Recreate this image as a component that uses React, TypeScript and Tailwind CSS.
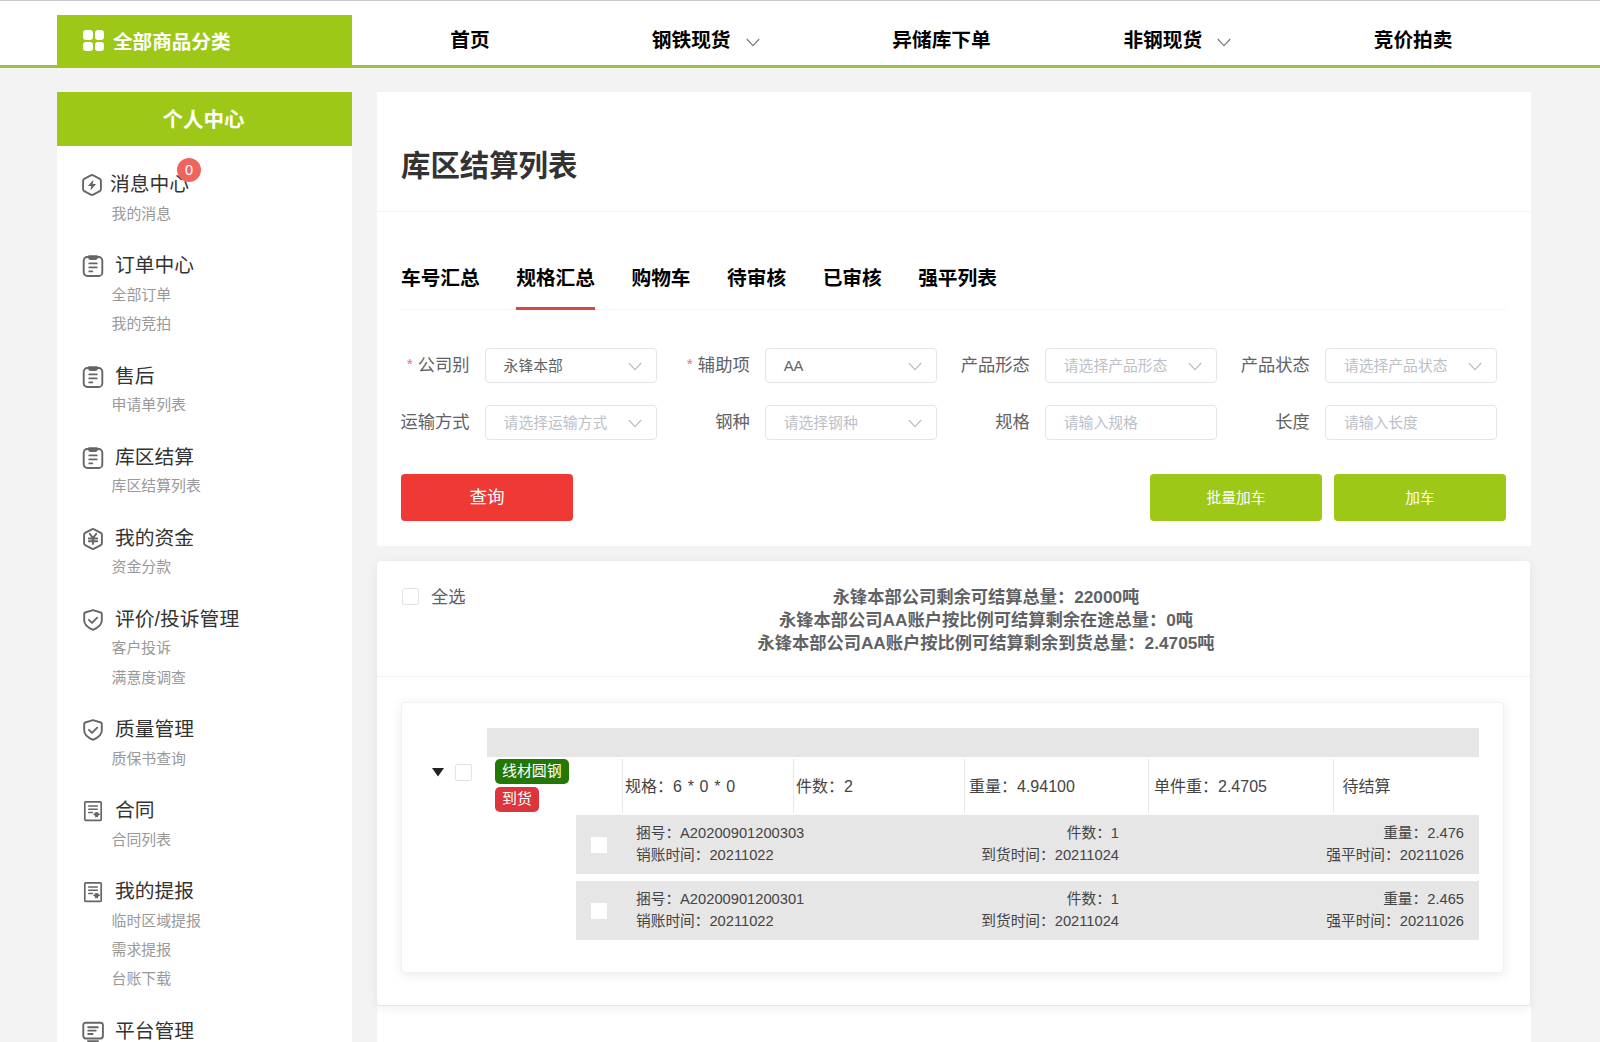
import { useState } from 'react'
import type { ReactNode } from 'react'
import clsx from 'clsx'

interface MenuGroup {
  icon: ReactNode
  title: string
  badge?: number
  children: string[]
}

interface Field {
  label: string
  required?: boolean
  value?: string
  placeholder?: string
  select?: boolean
}

function Svg({ children }: { children: ReactNode }) {
  return (
    <svg
      width="22"
      height="22"
      viewBox="0 0 22 22"
      fill="none"
      stroke="#666"
      strokeWidth="1.9"
      strokeLinecap="round"
      strokeLinejoin="round"
    >
      {children}
    </svg>
  )
}

const hexagon = (
  <path d="M9.8 1.4a2.4 2.4 0 0 1 2.4 0l6.600 3.500a2 2 0 0 1 1.100 1.800v8.600a2 2 0 0 1-1.100 1.800l-6.600 3.500a2.400 2.400 0 0 1-2.400 0l-6.600-3.500a2 2 0 0 1-1.100-1.800V6.700a2 2 0 0 1 1.100-1.800z" />
)

const messageIcon = (
  <Svg>
    {hexagon}
    <path
      d="M12.400 5.700 6.900 11.900h3.300l-.8 4.600 5.700-6.400h-3.400z"
      fill="#666"
      stroke="none"
    />
  </Svg>
)

const moneyIcon = (
  <Svg>
    {hexagon}
    <path d="m7.800 5.800 3.200 4.200 3.200-4.200M6.800 10.500h8.400M6.800 13.200h8.400M11 10.300v5.600" />
  </Svg>
)

const orderIcon = (
  <Svg>
    <rect x="1.700" y="2" width="18.600" height="19" rx="3.600" />
    <path d="M7 1.200h8v.8a2 2 0 0 1-2 2H9a2 2 0 0 1-2-2z" />
    <path d="M7.300 8.400h7.400M7.300 12.400h7.400M7.300 16.400h3" />
  </Svg>
)

const shieldIcon = (
  <Svg>
    <path d="m11 1.200 7.800 2.300q1 .3 1 1.300v6.700c0 4.200-3.800 7.200-8.800 9.300-5-2.100-8.800-5.100-8.800-9.300V4.800q0-1 1-1.300z" />
    <path d="m6.900 10.900 3.100 3 5.200-5.200" />
  </Svg>
)

const contractIcon = (
  <Svg>
    <rect x="2.800" y="1.900" width="16.400" height="18.400" rx=".8" strokeWidth="1.700" />
    <path d="M6.700 6h8.600M6.700 9.200h8.600M6.700 12.400h3.700" strokeWidth="1.500" />
    <circle cx="14.600" cy="14.300" r="2.400" fill="#666" stroke="none" />
    <path d="M13.200 15v2.600l1.400-.6 1.400.6V15z" fill="#666" stroke="none" />
    <path d="M11.800 14.300h5.600" strokeWidth="1.200" />
  </Svg>
)

const platformIcon = (
  <Svg>
    <rect x="1.300" y="1.700" width="19.600" height="15.800" rx="2.400" />
    <path d="M6.200 6.200h9.600M6.200 9.600h7.600M6.200 13h4.400M6 20.100h10" />
  </Svg>
)

const menus: MenuGroup[] = [
  { icon: messageIcon, title: '消息中心', badge: 0, children: ['我的消息'] },
  { icon: orderIcon, title: '订单中心', children: ['全部订单', '我的竞拍'] },
  { icon: orderIcon, title: '售后', children: ['申请单列表'] },
  { icon: orderIcon, title: '库区结算', children: ['库区结算列表'] },
  { icon: moneyIcon, title: '我的资金', children: ['资金分款'] },
  { icon: shieldIcon, title: '评价/投诉管理', children: ['客户投诉', '满意度调查'] },
  { icon: shieldIcon, title: '质量管理', children: ['质保书查询'] },
  { icon: contractIcon, title: '合同', children: ['合同列表'] },
  {
    icon: contractIcon,
    title: '我的提报',
    children: ['临时区域提报', '需求提报', '台账下载'],
  },
  { icon: platformIcon, title: '平台管理', children: [] },
]

const navs = [
  { title: '首页' },
  { title: '钢铁现货', arrow: true },
  { title: '异储库下单' },
  { title: '非钢现货', arrow: true },
  { title: '竞价拍卖' },
]

const tabs = ['车号汇总', '规格汇总', '购物车', '待审核', '已审核', '强平列表']

const fields: Field[] = [
  { label: '公司别', required: true, value: '永锋本部', select: true },
  { label: '辅助项', required: true, value: 'AA', select: true },
  { label: '产品形态', placeholder: '请选择产品形态', select: true },
  { label: '产品状态', placeholder: '请选择产品状态', select: true },
  { label: '运输方式', placeholder: '请选择运输方式', select: true },
  { label: '钢种', placeholder: '请选择钢种', select: true },
  { label: '规格', placeholder: '请输入规格' },
  { label: '长度', placeholder: '请输入长度' },
]

const bundles = [
  { no: 'A20200901200303', weight: '2.476' },
  { no: 'A20200901200301', weight: '2.465' },
]

function Chevron({ color }: { color: string }) {
  return (
    <svg width="14" height="9" viewBox="0 0 14 9" fill="none" stroke={color} strokeWidth="1.1">
      <path d="m.8 1 6.200 6.600L13.200 1" />
    </svg>
  )
}

function Checkbox({ plain }: { plain?: boolean }) {
  return (
    <span
      className={clsx(
        'block shrink-0 bg-white',
        plain ? 'size-4' : 'size-[17px] rounded-[2px] border border-[#e2e3e6]'
      )}
    />
  )
}

function Header() {
  return (
    <header className="flex h-[68px] border-t border-b-[3px] border-t-[#c6c6c6] border-b-[#a2bf45] bg-white pl-[57px]">
      <div className="mt-[14px] flex h-[53px] w-[295px] items-center bg-[#9dc817] pt-[2px] pl-[26px] text-[19.6px] font-bold text-white">
        <div className="mr-[9px] mb-[4px] grid grid-cols-2 gap-[2px]">
          {[0, 1, 2, 3].map((i) => (
            <span key={i} className="size-[9.500px] rounded-[3px] bg-white" />
          ))}
        </div>
        全部商品分类
      </div>
      <nav className="flex h-[80px] w-[1179px] text-[19.7px] font-bold text-black">
        {navs.map((nav) => (
          <div key={nav.title} className="flex flex-1 items-center justify-center gap-[15px]">
            {nav.title}
            {nav.arrow && (
              <span className="mt-[3px]">
                <Chevron color="#777" />
              </span>
            )}
          </div>
        ))}
      </nav>
    </header>
  )
}

function Sidebar() {
  return (
    <aside className="w-[295px] shrink-0 bg-white">
      <div className="flex h-[54px] items-center justify-center bg-[#9dc817] pt-[2px] pr-[2px] text-[20.500px] font-bold text-white">
        个人中心
      </div>
      <div className="pt-[24.6px] pl-[25px]">
        {menus.map((menu) => (
          <div key={menu.title} className="mb-[22.2px]">
            <div className="flex h-[29.4px] items-center text-[19.8px] text-[#333]">
              <span className={clsx(menu.badge !== undefined && 'mb-px -ml-px')}>{menu.icon}</span>
              <span className={clsx('relative', menu.badge === undefined ? 'ml-[11px]' : 'ml-[7px]')}>
                {menu.title}
                {menu.badge !== undefined && (
                  <span className="absolute -top-[12px] right-[-12px] flex size-6 items-center justify-center rounded-full bg-[#f06460] text-[14.500px] text-white">
                    {menu.badge}
                  </span>
                )}
              </span>
            </div>
            {menu.children.map((child) => (
              <div key={child} className="h-[29.4px] pl-[29.500px] text-[14.9px] leading-[29.4px] text-[#999]">
                {child}
              </div>
            ))}
          </div>
        ))}
      </div>
    </aside>
  )
}

function FormItem({ field }: { field: Field }) {
  return (
    <div className="flex items-center">
      <div className="flex w-[69px] shrink-0 justify-end text-[17.3px] whitespace-nowrap text-[#606266]">
        {field.required && <span className="-mt-px mr-[5px] text-[15.500px] text-[#f56c6c]">*</span>}
        {field.label}
      </div>
      <div className="ml-[15px] flex h-[35px] w-[172px] items-center justify-between rounded-[4px] border border-[#e2e4e8] pt-px pr-[14px] pl-[18px] text-[14.8px]">
        <span className={field.value ? 'text-[#606266]' : 'text-[#bcc0c7]'}>
          {field.value ?? field.placeholder}
        </span>
        {field.select && <Chevron color="#b9bdc4" />}
      </div>
    </div>
  )
}

function SearchPanel() {
  const [active, setActive] = useState(1)

  return (
    <section className="h-[454px] bg-white">
      <h1 className="flex h-[120px] items-center border-b border-[#f4f4f4] pt-[29px] pl-6 text-[29.4px] font-bold text-[#333]">
        库区结算列表
      </h1>
      <div className="pr-[25px] pl-6">
        <div className="mt-[34px] flex h-[64px] gap-[36.500px] border-b border-[#f4f4f4] text-[19.7px] font-bold text-black">
          {tabs.map((tab, i) => (
            <div
              key={tab}
              className={clsx(
                'h-[64px] border-b-[3px] leading-[65px]',
                i === active ? 'border-[#d9473f]' : 'border-transparent'
              )}
              onClick={() => setActive(i)}
            >
              {tab}
            </div>
          ))}
        </div>
        <div className="-ml-[0.4px] mt-[38px] grid grid-cols-[repeat(4,280.1px)] gap-y-[22px]">
          {fields.map((field) => (
            <FormItem key={field.label} field={field} />
          ))}
        </div>
        <div className="mt-[34px] flex gap-3 text-[14.7px] text-white">
          <button className="mr-auto h-[47px] w-[172px] rounded-[4px] bg-[#ee3935] text-[17.6px]">
            查询
          </button>
          <button className="h-[47px] w-[172px] rounded-[4px] bg-[#9dc817] pt-px">批量加车</button>
          <button className="h-[47px] w-[172px] rounded-[4px] bg-[#9dc817] pt-px">加车</button>
        </div>
      </div>
    </section>
  )
}

function BundleRow({ no, weight }: { no: string; weight: string }) {
  return (
    <div className="mb-[7px] ml-[88.500px] flex h-[59px] items-center bg-[#e6e6e6] pr-[15px] pl-[15px] text-[14.7px] leading-[22px] text-[#444]">
      <Checkbox plain />
      <div className="-mt-[2px] ml-[29.500px] w-[200px]">
        <div>捆号：{no}</div>
        <div>销账时间：20211022</div>
      </div>
      <div className="-mt-[2px] w-[283px] text-right">
        <div>件数：1</div>
        <div>到货时间：20211024</div>
      </div>
      <div className="-mt-[2px] ml-auto text-right">
        <div>重量：{weight}</div>
        <div>强平时间：20211026</div>
      </div>
    </div>
  )
}

function ResultList() {
  return (
    <section className="relative mr-px h-[445px] rounded-[4px] border-b border-[#e6e6e6] bg-white shadow-[0_2px_12px_0_rgba(0,0,0,0.07)]">
      <div className="flex h-[116px] border-b border-[#f0f1f3] px-6 text-[17.3px] text-[#606266]">
        <div className="mt-[25px] flex h-6 w-[100px] items-center gap-[12px]">
          <span className="mb-[3px] ml-px">
            <Checkbox />
          </span>
          全选
        </div>
        <div className="mt-[25px] w-[970px] text-center text-[17.25px] leading-[23px] font-bold">
          <div>永锋本部公司剩余可结算总量：22000吨</div>
          <div>永锋本部公司AA账户按比例可结算剩余在途总量：0吨</div>
          <div>永锋本部公司AA账户按比例可结算剩余到货总量：2.4705吨</div>
        </div>
      </div>
      <div className="mr-[26px] ml-[24px] mt-[25px] flex h-[271px] rounded-[4px] border border-[#f0f1f3] bg-white pt-[25px] pr-[24px] pl-[29.500px] shadow-[0_2px_12px_0_rgba(0,0,0,0.08)]">
        <div className="mt-[36px] flex h-[17px] w-[55.500px] shrink-0 items-center gap-[11.500px]">
          <svg width="12" height="9" viewBox="0 0 12 9">
            <path d="M0 0h12L6 8.500z" fill="#222" />
          </svg>
          <Checkbox />
        </div>
        <div className="flex-1">
          <div className="h-[29px] bg-[#e6e6e6]" />
          <div className="flex h-[58px] pt-[2px] pb-[2px] text-[16px] text-[#444]">
            <div className="flex w-[135px] shrink-0 flex-col items-start gap-[3px] pl-2 text-[14.9px] leading-[25px] text-white">
              <span className="rounded-[5px] bg-[#237804] px-[7px]">线材圆钢</span>
              <span className="rounded-[5px] bg-[#dc353c] px-[7px]">到货</span>
            </div>
            <div className="flex w-[171px] items-center border-l border-[#e9e9e9] pt-px pl-[2px] [word-spacing:1.3px]">
              规格：6 * 0 * 0
            </div>
            <div className="flex w-[171px] items-center border-l border-[#e9e9e9] pt-px pl-[2px]">
              件数：2
            </div>
            <div className="flex w-[184px] items-center border-l border-[#e9e9e9] pt-px pl-[4px]">
              重量：4.94100
            </div>
            <div className="flex w-[184.500px] items-center border-l border-[#e9e9e9] pt-px pl-[5px]">
              单件重：2.4705
            </div>
            <div className="flex flex-1 items-center border-l border-[#e9e9e9] pt-px pl-[9px]">
              待结算
            </div>
          </div>
          {bundles.map((bundle) => (
            <BundleRow key={bundle.no} {...bundle} />
          ))}
        </div>
      </div>
    </section>
  )
}

export default function App() {
  return (
    <div className="h-screen overflow-hidden bg-[#f3f3f3] font-['Liberation_Sans','Noto_Sans_CJK_SC',sans-serif]">
      <Header />
      <div className="flex pt-6 pl-[57px]">
        <Sidebar />
        <main className="ml-[25px] w-[1154px]">
          <SearchPanel />
          <div className="h-[15px]" />
          <ResultList />
          <div className="h-[60px] bg-white" />
        </main>
      </div>
    </div>
  )
}
